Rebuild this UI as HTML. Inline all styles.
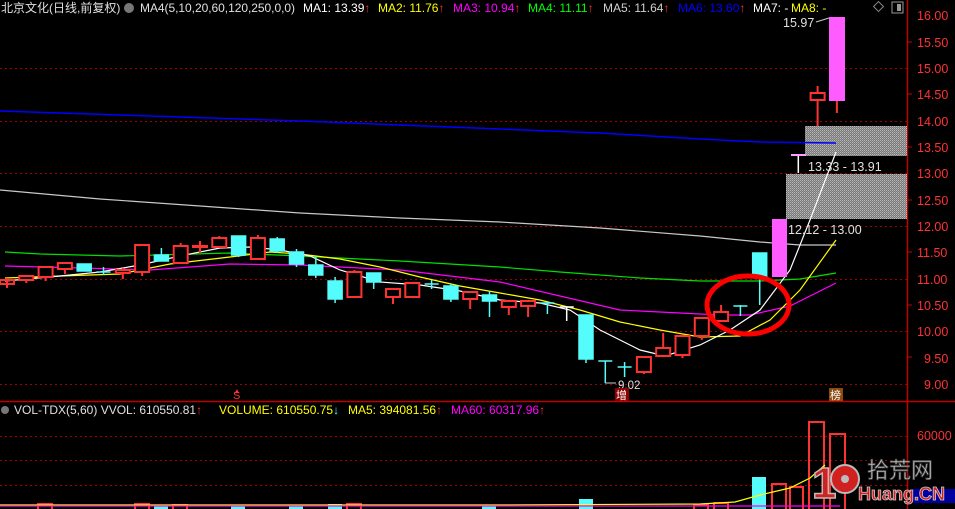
<!DOCTYPE html>
<html><head><meta charset="utf-8"><style>
html,body{margin:0;padding:0;background:#000;width:955px;height:509px;overflow:hidden}
svg{display:block}
text{font-family:"Liberation Sans","Noto Sans CJK SC",sans-serif}
</style></head><body>
<svg width="955" height="509" viewBox="0 0 955 509" xmlns="http://www.w3.org/2000/svg">
<defs>
<pattern id="hatch" width="2" height="2" patternUnits="userSpaceOnUse">
<rect width="2" height="2" fill="#7a7a7a"/><rect width="1" height="1" fill="#b8b8b8"/><rect x="1" y="1" width="1" height="1" fill="#9a9a9a"/>
</pattern>
</defs>
<g stroke="#a00000" stroke-width="1" stroke-dasharray="2,3">
<line x1="0" y1="68.5" x2="907" y2="68.5"/>
<line x1="0" y1="121.5" x2="907" y2="121.5"/>
<line x1="0" y1="173.5" x2="907" y2="173.5"/>
<line x1="0" y1="226.5" x2="907" y2="226.5"/>
<line x1="0" y1="279.5" x2="907" y2="279.5"/>
<line x1="0" y1="331.5" x2="907" y2="331.5"/>
<line x1="0" y1="384.5" x2="907" y2="384.5"/>
<line x1="0" y1="436.5" x2="907" y2="436.5"/>
<line x1="0" y1="460.5" x2="907" y2="460.5"/>
<line x1="0" y1="485.5" x2="907" y2="485.5"/>
</g>
<line x1="0" y1="401.5" x2="955" y2="401.5" stroke="#c00000" stroke-width="1.5"/>
<line x1="907.5" y1="0" x2="907.5" y2="509" stroke="#c00000" stroke-width="1.5"/>
<g fill="#ff3232" font-size="12.5">
<text x="917" y="20">16.00</text><text x="917" y="47">15.50</text><text x="917" y="73">15.00</text>
<text x="917" y="99">14.50</text><text x="917" y="126">14.00</text><text x="917" y="152">13.50</text>
<text x="917" y="178">13.00</text><text x="917" y="205">12.50</text><text x="917" y="231">12.00</text>
<text x="917" y="257">11.50</text><text x="917" y="284">11.00</text><text x="917" y="310">10.50</text>
<text x="917" y="336">10.00</text><text x="924" y="363">9.50</text><text x="924" y="389">9.00</text>
<text x="917" y="440">60000</text>
</g>
<g stroke="#c00000"><line x1="907" y1="42" x2="912" y2="42"/><line x1="907" y1="94" x2="912" y2="94"/><line x1="907" y1="147" x2="912" y2="147"/><line x1="907" y1="200" x2="912" y2="200"/><line x1="907" y1="252" x2="912" y2="252"/><line x1="907" y1="305" x2="912" y2="305"/><line x1="907" y1="357" x2="912" y2="357"/></g>
<rect x="805" y="126" width="102" height="30" fill="url(#hatch)"/>
<rect x="786" y="174" width="121" height="45" fill="url(#hatch)"/>
<g fill="none" stroke-width="1.2">
<polyline stroke="#0000ff" stroke-width="1.5" points="0,111 150,116 300,121 450,127 600,133 700,139 760,142 836,143"/>
<polyline stroke="#c8c8c8" points="0,190 100,199 200,206 300,213 400,218 500,222 600,228 700,236 760,242 800,245 836,245"/>
<polyline stroke="#00e000" points="5,252 40,254 120,256 230,253 300,256 400,261 500,267 560,272 640,278 700,281 760,281 800,279 836,273"/>
<polyline stroke="#ff00ff" points="5,266 80,268 150,270 230,264 300,265 400,270 500,282 560,296 620,310 680,313 720,315 750,315 790,306 836,283"/>
<polyline stroke="#ffff00" points="5,278 60,276 120,274 170,264 230,257 270,252 300,254 340,259 380,267 420,277 460,286 500,293 540,300 580,310 620,322 660,330 700,337 740,336 770,320 800,290 836,240"/>
<polyline stroke="#ffffff" points="5,281 60,276 100,272 140,265 180,256 220,248 250,247 280,250 310,256 340,270 380,282 420,285 460,291 500,300 540,303 570,310 600,330 640,350 665,356 700,345 730,330 760,310 790,270 810,220 836,152"/>
</g>
<g stroke="#ff3232" stroke-width="2" fill="none">
<line x1="7" y1="278" x2="7" y2="288"/><rect x="0" y="280" width="14" height="4"/>
<line x1="26.3" y1="275" x2="26.3" y2="283"/><rect x="19.3" y="276" width="14" height="4" fill="#000"/>
<line x1="45.6" y1="266" x2="45.6" y2="281"/><rect x="38.6" y="267" width="14" height="10" fill="#000"/>
<line x1="64.9" y1="262" x2="64.9" y2="274"/><rect x="57.9" y="263" width="14" height="6" fill="#000"/>
<line x1="122.8" y1="268" x2="122.8" y2="279"/><rect x="115.8" y="270" width="14" height="3" fill="#000"/>
<line x1="142.1" y1="245" x2="142.1" y2="276"/><rect x="135.1" y="245" width="14" height="27" fill="#000"/>
<line x1="180.7" y1="243" x2="180.7" y2="263"/><rect x="173.7" y="246" width="14" height="17" fill="#000"/>
<line x1="200" y1="241" x2="200" y2="253"/><rect x="193" y="246" width="14" height="1" fill="#000"/>
<line x1="219.3" y1="236" x2="219.3" y2="247"/><rect x="212.3" y="238" width="14" height="9" fill="#000"/>
<line x1="257.9" y1="235" x2="257.9" y2="260"/><rect x="250.9" y="238" width="14" height="21" fill="#000"/>
<line x1="354.4" y1="270" x2="354.4" y2="298"/><rect x="347.4" y="272" width="14" height="25" fill="#000"/>
<line x1="393" y1="289" x2="393" y2="304"/><rect x="386" y="289" width="14" height="8" fill="#000"/>
<rect x="405.3" y="283" width="14" height="14" fill="#000"/>
<line x1="470.2" y1="291" x2="470.2" y2="309"/><rect x="463.2" y="292" width="14" height="7" fill="#000"/>
<line x1="508.8" y1="301" x2="508.8" y2="315"/><rect x="501.8" y="301" width="14" height="6" fill="#000"/>
<line x1="528.1" y1="301" x2="528.1" y2="317"/><rect x="521.1" y="301" width="14" height="5" fill="#000"/>
<line x1="643.9" y1="356" x2="643.9" y2="374"/><rect x="636.9" y="357" width="14" height="15" fill="#000"/>
<line x1="663.2" y1="333" x2="663.2" y2="357"/><rect x="656.2" y="348" width="14" height="8" fill="#000"/>
<line x1="682.5" y1="336" x2="682.5" y2="358"/><rect x="675.5" y="336" width="14" height="19" fill="#000"/>
<line x1="701.8" y1="318" x2="701.8" y2="340"/><rect x="694.8" y="318" width="14" height="18" fill="#000"/>
<line x1="721.1" y1="305" x2="721.1" y2="321"/><rect x="714.1" y="312" width="14" height="9" fill="#000"/>
<line x1="817.6" y1="86" x2="817.6" y2="126"/><rect x="810.6" y="93" width="14" height="7" fill="#000"/>
<line x1="836.9" y1="100" x2="836.9" y2="113"/>
</g>
<g fill="#54fcfc" stroke="#54fcfc" stroke-width="1.5">
<rect x="77.2" y="264" width="14" height="7"/>
<line x1="103.5" y1="267" x2="103.5" y2="275"/><line x1="96.5" y1="272" x2="110.5" y2="272"/>
<line x1="161.4" y1="248" x2="161.4" y2="261"/><rect x="154.4" y="255" width="14" height="6"/>
<rect x="231.6" y="236" width="14" height="19"/><line x1="238.6" y1="255" x2="238.6" y2="257"/>
<line x1="277.2" y1="237" x2="277.2" y2="253"/><rect x="270.2" y="239" width="14" height="12"/>
<line x1="296.5" y1="249" x2="296.5" y2="267"/><rect x="289.5" y="252" width="14" height="12"/>
<line x1="315.8" y1="257" x2="315.8" y2="278"/><rect x="308.8" y="265" width="14" height="10"/>
<line x1="335.1" y1="277" x2="335.1" y2="303"/><rect x="328.1" y="281" width="14" height="18"/>
<line x1="373.7" y1="273" x2="373.7" y2="289"/><rect x="366.7" y="273" width="14" height="9"/>
<line x1="431.6" y1="280" x2="431.6" y2="289"/><line x1="424.6" y1="284" x2="438.6" y2="284"/>
<line x1="450.9" y1="284" x2="450.9" y2="302"/><rect x="443.9" y="286" width="14" height="13"/>
<line x1="489.5" y1="291" x2="489.5" y2="317"/><rect x="482.5" y="295" width="14" height="6"/>
<line x1="547.4" y1="303" x2="547.4" y2="314"/><line x1="540.4" y1="303" x2="554.4" y2="303"/>
<line x1="586" y1="315" x2="586" y2="363"/><rect x="579" y="315" width="14" height="44"/>
<line x1="605.3" y1="361" x2="605.3" y2="383"/><line x1="598.3" y1="361" x2="612.3" y2="361"/>
<line x1="624.6" y1="362" x2="624.6" y2="377"/><line x1="617.6" y1="367" x2="631.6" y2="367"/>
<line x1="740.4" y1="305" x2="740.4" y2="316"/><line x1="733.4" y1="306" x2="747.4" y2="306"/>
<line x1="759.7" y1="277" x2="759.7" y2="305"/><rect x="752.7" y="253" width="14" height="24"/>
</g>
<g stroke="#fff" stroke-width="1.5"><line x1="566.7" y1="307" x2="566.7" y2="321"/><line x1="559.7" y1="307" x2="573.7" y2="307"/>
<line x1="798.3" y1="155" x2="798.3" y2="173"/></g>
<line x1="791" y1="155" x2="806" y2="155" stroke="#ff9cff" stroke-width="2"/>
<rect x="772" y="219" width="15" height="58" fill="#ff5cff"/>
<rect x="829" y="17" width="16" height="84" fill="#ff5cff"/>
<g fill="#e0e0e0" font-size="12.5">
<text x="808" y="171">13.33 - 13.91</text>
<text x="788" y="234">12.12 - 13.00</text>
<text x="783" y="27">15.97</text>
<text x="618" y="389" font-size="11.5">9.02</text>
</g>
<line x1="816" y1="22" x2="829" y2="18" stroke="#ccc"/>
<line x1="605" y1="383" x2="616" y2="383" stroke="#ccc"/>
<ellipse cx="748" cy="305" rx="41" ry="29" fill="none" stroke="#ff0000" stroke-width="5"/>
<text x="233" y="399" fill="#ff3232" font-size="11">S</text>
<polygon points="237,389 235,393 239,393" fill="#ff3232"/>
<rect x="615" y="388" width="14" height="13" fill="#8b0000"/><text x="616" y="399" fill="#fff" font-size="11">增</text>
<rect x="829" y="388" width="14" height="13" fill="#8b4a10"/><text x="830" y="399" fill="#fff" font-size="11">榜</text>
<g font-size="12">
<text x="1" y="12" fill="#e0e0e0">北京文化(日线,前复权)</text>
<circle cx="129" cy="8" r="5" fill="#777"/>
<text x="140" y="12" fill="#e0e0e0" textLength="155">MA4(5,10,20,60,120,250,0,0)</text>
<text x="303" y="12" fill="#fff">MA1: 13.39<tspan fill="#ff3232">↑</tspan></text>
<text x="378" y="12" fill="#ffff00">MA2: 11.76<tspan fill="#ff3232">↑</tspan></text>
<text x="453" y="12" fill="#ff00ff">MA3: 10.94<tspan fill="#ff3232">↑</tspan></text>
<text x="528" y="12" fill="#00ff00">MA4: 11.11<tspan fill="#ff3232">↑</tspan></text>
<text x="603" y="12" fill="#d0d0d0">MA5: 11.64<tspan fill="#ff3232">↑</tspan></text>
<text x="678" y="12" fill="#0000ff">MA6: 13.60<tspan fill="#ff3232">↑</tspan></text>
<text x="753" y="12" fill="#fff">MA7: -</text>
<text x="791" y="12" fill="#ffff00">MA8: -</text>
</g>
<rect x="875" y="3" width="7" height="7" fill="none" stroke="#888" transform="rotate(45 878.5 6.5)"/>
<rect x="892" y="2" width="11" height="11" fill="none" stroke="#999"/><rect x="897" y="4" width="4" height="7" fill="#999"/>
<g font-size="12">
<circle cx="5" cy="410" r="4" fill="#777"/>
<text x="14" y="414" fill="#e0e0e0">VOL-TDX(5,60) VVOL: 610550.81<tspan fill="#ff3232">↑</tspan></text>
<text x="219" y="414" fill="#ffff00">VOLUME: 610550.75<tspan fill="#54fcfc">↓</tspan></text>
<text x="348" y="414" fill="#ffff00">MA5: 394081.56<tspan fill="#ff3232">↑</tspan></text>
<text x="451" y="414" fill="#ff00ff">MA60: 60317.96<tspan fill="#ff3232">↑</tspan></text>
</g>
<g fill="none" stroke="#ff3232" stroke-width="2">
<rect x="809" y="422" width="15" height="90"/>
<rect x="830" y="434" width="15" height="80"/>
<rect x="772" y="484" width="14" height="30"/>
<rect x="790" y="487" width="13" height="30"/>
<rect x="714" y="503" width="14" height="10"/>
<rect x="135" y="504" width="14" height="10"/><rect x="38" y="504" width="14" height="10"/><rect x="173" y="505" width="14" height="10"/><rect x="347" y="504" width="14" height="10"/><rect x="694" y="505" width="14" height="10"/>
</g>
<g fill="#54fcfc">
<rect x="752" y="477" width="14" height="32"/>
<rect x="579" y="499" width="14" height="10"/>
<rect x="154" y="505" width="14" height="4"/><rect x="231" y="505" width="14" height="4"/><rect x="328" y="504" width="14" height="5"/><rect x="289" y="505" width="14" height="4"/><rect x="482" y="505" width="14" height="4"/>
</g>
<polyline fill="none" stroke="#ffff00" stroke-width="1.2" points="0,505 500,505 700,504 735,502 760,495 790,488 810,478 825,465"/>
<line x1="0" y1="506" x2="840" y2="506" stroke="#ff00ff" stroke-width="1.2"/>
<rect x="913" y="489" width="42" height="14" fill="#0000a0"/>
<text x="812" y="498" font-size="44" font-weight="bold" fill="#d02020" stroke="#bbb" stroke-width="1.5">1</text>
<circle cx="845" cy="479" r="14" fill="#d02020" stroke="#bbb" stroke-width="2"/>
<circle cx="845" cy="479" r="4" fill="#bbb"/>
<text x="867" y="478" font-size="22" fill="#c8c8c8" stroke="#444" stroke-width="0.8">拾荒网</text>
<text x="858" y="500" font-size="18" font-weight="bold" fill="#d02020" stroke="#ccc" stroke-width="0.8">Huang.CN</text>
</svg>
</body></html>
